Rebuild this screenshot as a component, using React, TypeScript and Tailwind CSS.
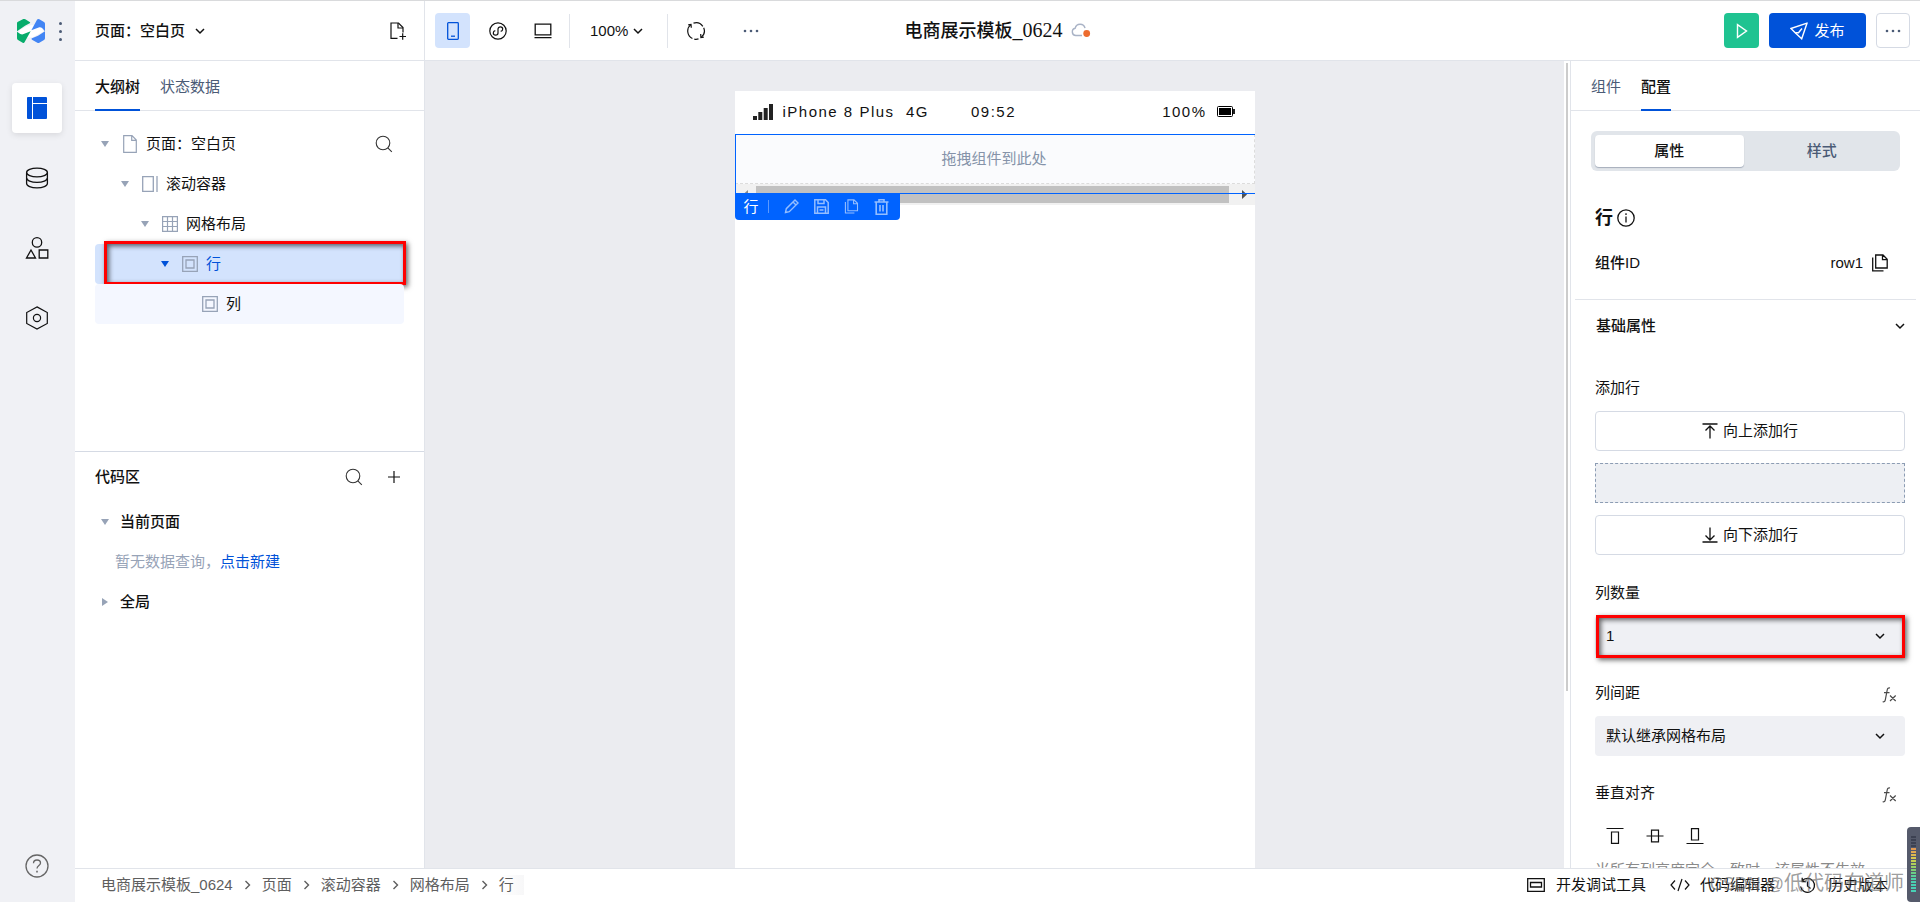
import React, { useState } from 'react';

type IconProps = { className?: string };

const ChevronDown: React.FC<IconProps> = ({ className = '' }) => (
  <svg className={className} width="10" height="10" viewBox="0 0 10 10" fill="none" stroke="currentColor" strokeWidth="1.5">
    <path d="M1 3l4 4 4-4" />
  </svg>
);

const ChevronRight: React.FC<IconProps> = ({ className = '' }) => (
  <svg className={className} width="9" height="10" viewBox="0 0 9 10" fill="none" stroke="currentColor" strokeWidth="1.4">
    <path d="M2.500 1l4 4-4 4" />
  </svg>
);

const SearchIcon = () => (
  <svg width="18" height="18" viewBox="0 0 18 18" fill="none" stroke="#333" strokeWidth="1.1">
    <circle cx="8" cy="8" r="6.8" />
    <path d="M12.800 12.800l4 4" />
  </svg>
);

const DotsIcon = () => (
  <svg width="16" height="4" viewBox="0 0 16 4" fill="#4b5b76">
    <circle cx="2" cy="2" r="1.300" />
    <circle cx="8" cy="2" r="1.300" />
    <circle cx="14" cy="2" r="1.300" />
  </svg>
);

const Caret = ({ open = true, active = false }: { open?: boolean; active?: boolean }) => (
  <svg width="10" height="10" viewBox="0 0 10 10" fill={active ? '#0052d9' : '#97a3b7'}>
    {open ? <path d="M1 2h8L5 8z" /> : <path d="M2 1v8l6-4z" />}
  </svg>
);

const Logo = () => (
  <svg width="28" height="24" viewBox="0 0 84 72">
    <path fill="#fff" d="M8 34L30 21l16-3 30 8 2 12-30 17-24 1L6 44z" />
    <path fill="#07ac6b" d="M0 12Q0 9 3 8L19 0q3-1 6 1l13 8q3 2 0 4L24 20 0 37z" />
    <path fill="#07ac6b" d="M0 38l10 7q4 2 8 1l23-9-18 32q-2 4-6 2L3 63q-3-2-3-5z" />
    <path fill="#4285f4" d="M84 37l-8-9q-4-4-9-3l-24 9L60 2q3-3 7-1l14 8q3 2 3 5z" />
    <path fill="#4285f4" d="M84 37v21q0 3-3 5l-14 8q-3 2-6 0L45 62q-3-2 0-4l18-8z" />
  </svg>
);

const LayoutIcon = () => (
  <svg width="22" height="22" viewBox="0 0 22 22" fill="#0052d9">
    <path d="M2 0h4v22H2a1 1 0 0 1-1-1V1a1 1 0 0 1 1-1z" />
    <path d="M7 0h13a1 1 0 0 1 1 1v5H7z" />
    <path d="M7 7h14v14a1 1 0 0 1-1 1H7z" />
  </svg>
);

const DatabaseIcon = () => (
  <svg width="24" height="22" viewBox="0 0 24 22" fill="none" stroke="currentColor" strokeWidth="1.3">
    <ellipse cx="12" cy="5.500" rx="10.400" ry="4.300" />
    <path d="M1.600 5.500v11c0 2.400 4.600 4.300 10.400 4.300s10.400-1.900 10.400-4.300v-11" />
    <path d="M1.600 11c0 2.400 4.600 4.300 10.400 4.300s10.400-1.900 10.400-4.300" />
  </svg>
);

const ShapesIcon = () => (
  <svg width="24" height="22" viewBox="0 0 24 22" fill="none" stroke="currentColor" strokeWidth="1.3">
    <circle cx="12" cy="5.400" r="4.700" />
    <path d="M6 13l4.500 8h-9z" />
    <path d="M14.200 13h8.600v8h-8.600z" />
  </svg>
);

const HexagonIcon = () => (
  <svg width="24" height="24" viewBox="0 0 24 24" fill="none" stroke="currentColor" strokeWidth="1.2">
    <path d="M12 0.900l10.300 5.600v11L12 23.100 1.700 17.500v-11z" />
    <circle cx="12" cy="12" r="3.600" />
  </svg>
);

const HelpIcon = () => (
  <svg width="24" height="24" viewBox="0 0 24 24" fill="none" stroke="#666" strokeWidth="1.3">
    <circle cx="12" cy="12" r="11" />
    <path d="M8.500 9.300c0-2 1.500-3.300 3.500-3.300s3.500 1.300 3.500 3.100c0 2.400-3.500 2.500-3.500 5.400" />
    <path d="M12 16.800v1.600" strokeWidth="1.6" />
  </svg>
);

const FilePlusIcon = () => (
  <svg width="18" height="18" viewBox="0 0 18 18" fill="none" stroke="currentColor" strokeWidth="1.2">
    <path d="M8.500 16.300H2V1h7.500l4.500 4.500v5" />
    <path d="M9 1v5h5" />
    <path d="M10.500 14.500h6.500M13.700 11.300v6.500" />
  </svg>
);

const PhoneIcon = () => (
  <svg width="12" height="18" viewBox="0 0 12 18" fill="none" stroke="#0052d9" strokeWidth="1.3">
    <rect x="0.700" y="0.700" width="10.600" height="16.600" rx="0.800" />
    <path d="M4 14.200h4" />
  </svg>
);

const MiniProgramIcon = () => (
  <svg width="18" height="18" viewBox="0 0 18 18" fill="none" stroke="currentColor" strokeWidth="1.2">
    <circle cx="9" cy="9" r="8.200" />
    <path d="M6.300 8.700C4.800 9 4.300 10 4.300 11c0 1.300 1 2.200 2.300 2.200S9 12.300 9 11V7c0-1.300 1.100-2.200 2.400-2.200S13.700 5.700 13.700 7c0 1-.5 2-2 2.300" />
  </svg>
);

const LaptopIcon = () => (
  <svg width="18" height="16" viewBox="0 0 18 16" fill="none" stroke="currentColor" strokeWidth="1.3">
    <path d="M1.200 1.200h15.600v10.600H1.200zM0.500 14.700h17" />
  </svg>
);

const RefreshIcon = () => (
  <svg width="20" height="20" viewBox="0 0 20 20" fill="none" stroke="currentColor" strokeWidth="1.2">
    <path d="M6.400 17.500A8.300 8.300 0 0 1 4.800 3.600M7.500 2.100a8.300 8.300 0 0 1 9.300 3.200" />
    <path d="M17.700 6.800a8.300 8.300 0 0 1-2.500 9.600M12.500 17.900a8.300 8.300 0 0 1-4.200.2" />
    <path d="M2.200 3.900l2.800-.4.300 3.300M17.800 16.100l-2.900.4-.2-3.500" />
  </svg>
);

const CloudIcon = () => (
  <svg width="20" height="15" viewBox="0 0 20 15" fill="none">
    <path d="M11 12.500H4.800a3.700 3.700 0 0 1-.6-7.300A5 5 0 0 1 14 5.200" stroke="#a9b3c6" strokeWidth="1.4" />
    <circle cx="15.700" cy="10.500" r="3.400" fill="#ed6c2f" />
  </svg>
);

const SendIcon = () => (
  <svg width="18" height="18" viewBox="0 0 18 18" fill="none" stroke="currentColor" strokeWidth="1.4">
    <path d="M17 1.200L0.900 6.500l4.300 4.300 6.500 6z" />
    <path d="M5.200 10.800h3.300L12 6.500" />
  </svg>
);

const PageIcon = () => (
  <svg width="14" height="18" viewBox="0 0 14 18" fill="none" stroke="#97a3b7" strokeWidth="1.2">
    <path d="M0.700 0.700h8.300l4.300 4.300v12.300H0.700z M8.700 0.700v4.600h4.600" />
  </svg>
);

const ScrollIcon = () => (
  <svg width="16" height="16" viewBox="0 0 16 16" fill="none" stroke="#97a3b7" strokeWidth="1.3">
    <path d="M0.700 0.700h10.600v14.600H0.700zM15 0v16" />
  </svg>
);

const GridIcon = () => (
  <svg width="16" height="16" viewBox="0 0 16 16" fill="none" stroke="#97a3b7" strokeWidth="1.2">
    <path d="M0.600 0.600h14.800v14.800H0.600zM0.600 5.500h14.800M0.600 10.500h14.800M5.500 0.600v14.800M10.500 0.600v14.800" />
  </svg>
);

const BoxIcon = () => (
  <svg width="16" height="16" viewBox="0 0 16 16" fill="none" stroke="#97a3b7" strokeWidth="1.3">
    <path d="M0.700 0.700h14.600v14.600H0.700zM4 4h8v8H4z" />
  </svg>
);

const CopyIcon = ({ size = 18 }: { size?: number }) => (
  <svg width={size} height={size} viewBox="0 0 18 18" fill="none" stroke="currentColor" strokeWidth="1.3">
    <path d="M4.700 1h7.300l4.200 4.200v8.800H4.700zM11.500 1v4.700h4.700M1.700 3.500v13.300h10.800" />
  </svg>
);

const PencilIcon = () => (
  <svg width="15" height="15" viewBox="0 0 15 15" fill="none" stroke="currentColor" strokeWidth="1.4">
    <path d="M1.500 13.500l.8-3.800L11 1l3 3-8.700 8.700zM9 3l3 3" />
  </svg>
);

const SaveIcon = () => (
  <svg width="15" height="15" viewBox="0 0 15 15" fill="none" stroke="currentColor" strokeWidth="1.5">
    <path d="M0.800 0.800h10.700l2.700 2.700v10.700H0.800zM4 1v3.500h6V1M3.500 14V8h8v6M5.500 11h4" />
  </svg>
);

const TrashIcon = () => (
  <svg width="15" height="16" viewBox="0 0 15 16" fill="none" stroke="currentColor" strokeWidth="1.6">
    <path d="M0.500 3h14M2.200 3v12.200h10.600V3M5 3V.8h5V3M6 6v6.500M9 6v6.500" />
  </svg>
);

const InfoIcon = () => (
  <svg width="18" height="18" viewBox="0 0 18 18" fill="none" stroke="currentColor" strokeWidth="1.3">
    <circle cx="9" cy="9" r="8.200" />
    <path d="M9 7.500v6M9 4.300v1.600" />
  </svg>
);

const FxIcon = () => (
  <svg width="15" height="16" viewBox="0 0 15 16" fill="none" stroke="#4a4a4a" strokeWidth="1.2">
    <path d="M8 1C6.300.6 5.500 1.500 5.200 3L3.300 12.800C3 14.500 2.200 15 .7 14.700M2 5.700h5.500M8 8.500l5.700 5.500M13.700 8.500L8 14" />
  </svg>
);

const AddUpIcon = () => (
  <svg width="16" height="16" viewBox="0 0 16 16" fill="none" stroke="currentColor" strokeWidth="1.3">
    <path d="M0.500 1h15M8 3.500v12M3.500 7.500L8 3l4.500 4.500" />
  </svg>
);

const AddDownIcon = () => (
  <svg width="16" height="16" viewBox="0 0 16 16" fill="none" stroke="currentColor" strokeWidth="1.3">
    <path d="M0.500 15h15M8 0.500v12M3.500 8.500L8 13l4.500-4.500" />
  </svg>
);

const AlignTopIcon = () => (
  <svg width="18" height="18" viewBox="0 0 18 18" fill="none" stroke="currentColor" strokeWidth="1.2">
    <path d="M0.500 1.500h17M5.500 5h7v11.300h-7z" />
  </svg>
);

const AlignMiddleIcon = () => (
  <svg width="18" height="18" viewBox="0 0 18 18" fill="none" stroke="currentColor" strokeWidth="1.2">
    <path d="M0.500 9h17M5.500 3.200h7v11.600h-7z" />
  </svg>
);

const AlignBottomIcon = () => (
  <svg width="18" height="18" viewBox="0 0 18 18" fill="none" stroke="currentColor" strokeWidth="1.2">
    <path d="M0.500 16.500h17M5.500 1.700h7V13h-7z" />
  </svg>
);

const DebugIcon = () => (
  <svg width="18" height="14" viewBox="0 0 18 14" fill="none" stroke="currentColor" strokeWidth="1.3">
    <path d="M0.700 0.700h16.600v12.600H0.700zM3.500 4.500h11v4.500h-11z" />
  </svg>
);

const CodeIcon = () => (
  <svg width="20" height="14" viewBox="0 0 20 14" fill="none" stroke="currentColor" strokeWidth="1.2">
    <path d="M5 2.500L1 7l4 4.500M15 2.500L19 7l-4 4.500M12 1L8 13" />
  </svg>
);

const HistoryIcon = () => (
  <svg width="17" height="17" viewBox="0 0 17 17" fill="none" stroke="currentColor" strokeWidth="1.3">
    <path d="M3 4A7 7 0 1 1 1.600 9.500M3.200 0.800V4.500h3.600M8.500 4.500V9l3 2.500" />
  </svg>
);

const SignalIcon = () => (
  <svg width="20" height="16" viewBox="0 0 20 16" fill="#222">
    <path d="M0 12h4v4H0zM5.300 8h4v8h-4zM10.700 4h4v12h-4zM16 0h4v16h-4z" />
  </svg>
);

const BatteryIcon = () => (
  <svg width="18" height="11" viewBox="0 0 18 11">
    <rect x="0.500" y="0.500" width="15" height="10" rx="1" fill="none" stroke="#000" />
    <rect x="2" y="2" width="12" height="7" fill="#000" />
    <path d="M16 3h2v5h-2z" fill="#222" />
  </svg>
);

// red frame drawn round the item being explained
const Callout = ({ className }: { className: string }) => (
  <span
    className={`pointer-events-none absolute border-3 border-[#fe0000] shadow-[2px_2px_5px_rgba(0,0,0,0.6),inset_2px_2px_5px_rgba(0,0,0,0.6)] ${className}`}
  />
);

const treeRows = [
  { name: '页面：空白页', indent: '', icon: <PageIcon />, open: true },
  { name: '滚动容器', indent: 'pl-5', icon: <ScrollIcon />, open: true },
  { name: '网格布局', indent: 'pl-10', icon: <GridIcon />, open: true },
  { name: '行', indent: 'pl-15', icon: <BoxIcon />, open: true, selected: true },
  { name: '列', indent: 'pl-20', icon: <BoxIcon />, open: false, child: true },
];

const navItems = [
  { label: '页面设计', icon: <LayoutIcon />, active: true },
  { label: '数据源', icon: <DatabaseIcon /> },
  { label: '素材', icon: <ShapesIcon /> },
  { label: '设置', icon: <HexagonIcon /> },
];

const crumbs = ['电商展示模板_0624', '页面', '滚动容器', '网格布局', '行'];

const meterBars = [
  'bg-[#3c4152]', 'bg-[#3c4152]', 'bg-[#3c4152]', 'bg-[#3c4152]', 'bg-[#e39a52]', 'bg-[#e0a94f]', 'bg-[#dcb94e]',
  'bg-[#d6c94f]', 'bg-[#c6cf52]', 'bg-[#b0cf5a]', 'bg-[#98cf66]', 'bg-[#80ce74]', 'bg-[#6bce86]', 'bg-[#5bcf99]',
  'bg-[#50d0a8]', 'bg-[#4bd0b0]', 'bg-[#48d1b5]', 'bg-[#48d1b5]', 'bg-[#48d1b5]',
];

const SideNav = () => (
  <nav className="flex w-[75px] shrink-0 flex-col items-center bg-[#f0f1f5] pr-px pb-[11px]">
    <div className="flex h-[60px] w-full items-center gap-[13px] pl-[17px]">
      <Logo />
      <button type="button" aria-label="菜单" className="flex w-1 flex-col items-center gap-[5px]">
        <i className="size-[3px] rounded-full bg-[#4b5b76]" />
        <i className="size-[3px] rounded-full bg-[#4b5b76]" />
        <i className="size-[3px] rounded-full bg-[#4b5b76]" />
      </button>
    </div>
    <div className="mt-[22px] flex flex-col gap-5">
      {navItems.map((item) => (
        <button
          key={item.label}
          type="button"
          aria-label={item.label}
          className={`flex size-[50px] items-center justify-center rounded ${item.active ? 'bg-white shadow-[0_2px_6px_rgba(0,0,0,0.1)]' : ''}`}
        >
          {item.icon}
        </button>
      ))}
    </div>
    <button type="button" aria-label="帮助" className="mt-auto flex size-[50px] items-center justify-center">
      <HelpIcon />
    </button>
  </nav>
);

const TopBar = () => (
  <header className="grid h-[60px] shrink-0 grid-cols-[1fr_auto_1fr] border-b border-[#e1e4ea]">
    <div className="flex items-center">
      <div className="flex h-full w-[350px] items-center border-r border-[#e1e4ea] pr-[17px] pl-5">
        <button type="button" className="flex items-center gap-[10px] font-medium">
          页面：空白页
          <ChevronDown />
        </button>
        <button type="button" aria-label="新建页面" className="ml-auto">
          <FilePlusIcon />
        </button>
      </div>
      <div className="flex items-center pl-[10px]">
        <button type="button" aria-label="手机" className="flex size-[35px] items-center justify-center rounded bg-[#d3e3fd]">
          <PhoneIcon />
        </button>
        <button type="button" aria-label="小程序" className="ml-[10px] flex size-[35px] items-center justify-center">
          <MiniProgramIcon />
        </button>
        <button type="button" aria-label="电脑" className="ml-[10px] flex size-[35px] items-center justify-center">
          <LaptopIcon />
        </button>
        <span className="ml-[9px] h-[34px] w-px bg-[#e1e4ea]" />
        <button type="button" className="ml-5 flex items-center gap-[5px]">
          100%
          <ChevronDown />
        </button>
        <span className="ml-6 h-[34px] w-px bg-[#e1e4ea]" />
        <button type="button" aria-label="刷新" className="ml-[18px]">
          <RefreshIcon />
        </button>
        <button type="button" aria-label="更多操作" className="ml-[37px]">
          <DotsIcon />
        </button>
      </div>
    </div>
    <h1 className="flex items-center gap-2 text-[18px] font-medium whitespace-nowrap">
      <span>
        电商展示模板
        <span className="font-['Liberation_Serif',serif] text-[20px]">_0624</span>
      </span>
      <CloudIcon />
    </h1>
    <div className="flex items-center justify-end gap-[10px] pr-[10px]">
      <button type="button" aria-label="预览" className="flex size-[35px] items-center justify-center rounded bg-[#1fc391]">
        <svg width="12" height="16" viewBox="0 0 12 16" fill="none" stroke="#fff" strokeWidth="1.4">
          <path d="M1.500 1.700v12.600L10.500 8z" />
        </svg>
      </button>
      <button type="button" className="flex h-[35px] w-[97px] items-center justify-center gap-[6px] rounded bg-[#0052d9] text-white">
        <SendIcon />
        发布
      </button>
      <button type="button" aria-label="更多" className="flex h-[35px] w-[34px] items-center justify-center rounded border border-[#d5dae4]">
        <DotsIcon />
      </button>
    </div>
  </header>
);

const OutlinePanel = () => (
  <aside className="flex w-[350px] shrink-0 flex-col border-r border-[#e1e4ea]">
    <section className="h-[390px] shrink-0">
      <div role="tablist" className="flex h-[50px] gap-5 border-b border-[#e1e4ea] px-5">
        <button type="button" role="tab" aria-selected="true" className="-mb-px border-b-2 border-[#0052d9] pt-[3px] font-medium">
          大纲树
        </button>
        <button type="button" role="tab" aria-selected="false" className="pt-[2px] text-[#4b5b76]">
          状态数据
        </button>
      </div>
      <ul className="px-5 pt-[13px]">
        {treeRows.map((row) => (
          <li
            key={row.name}
            className={`relative flex h-10 items-center ${row.indent} ${
              row.selected ? 'rounded bg-[#d3e3fd] text-[#0052d9]' : row.child ? 'rounded bg-[#f4f7ff]' : ''
            }`}
          >
            <span className="flex w-5 justify-center">{row.open && <Caret active={row.selected} />}</span>
            <span className="ml-[5px] flex w-5 justify-center">{row.icon}</span>
            <span className="ml-[6px]">{row.name}</span>
            {row.indent === '' && (
              <button type="button" aria-label="搜索组件" className="mr-[11px] ml-auto">
                <SearchIcon />
              </button>
            )}
            {row.selected && <Callout className="-top-[3px] -right-[2px] -bottom-px left-[9px]" />}
          </li>
        ))}
      </ul>
    </section>
    <section className="border-t border-[#d5dae4] px-5">
      <div className="flex h-[50px] items-center">
        <h2 className="font-medium">代码区</h2>
        <button type="button" aria-label="搜索代码" className="ml-auto">
          <SearchIcon />
        </button>
        <button type="button" aria-label="新建代码" className="mr-1 ml-[25px]">
          <svg width="12" height="12" viewBox="0 0 12 12" stroke="currentColor" strokeWidth="1.2">
            <path d="M0 6h12M6 0v12" />
          </svg>
        </button>
      </div>
      <div className="flex h-10 items-center gap-[10px] pl-[5px] font-medium">
        <Caret />
        当前页面
      </div>
      <p className="flex h-10 items-center pl-5 text-[#97a3b7]">
        暂无数据查询，
        <a href="#new" className="text-[#0052d9]">点击新建</a>
      </p>
      <div className="flex h-10 items-center gap-[10px] pl-[5px] font-medium">
        <Caret open={false} />
        全局
      </div>
    </section>
  </aside>
);

const Canvas = () => (
  <main className="flex min-w-0 flex-1 justify-center overflow-hidden bg-[#ebecf0] pt-[30px]">
    <div className="flex w-[520px] flex-col bg-white">
      <div className="flex h-[43px] items-center pr-5 pb-[2px] pl-[18px] tracking-widest">
        <div className="flex flex-1 items-center gap-[10px]">
          <SignalIcon />
          <span className="whitespace-pre">iPhone 8 Plus  4G</span>
        </div>
        <span>09:52</span>
        <div className="flex flex-1 items-center justify-end gap-[10px]">
          <span>100%</span>
          <BatteryIcon />
        </div>
      </div>
      <div className="relative">
        <div className="flex h-[50px] items-center justify-center border-r border-b border-dashed border-[#dcdcdc] bg-[#fafbfd] text-[#8593a9]">
          拖拽组件到此处
        </div>
        <div className="flex h-[21px] items-center bg-[#f1f1f1]">
          <span className="flex w-[21px] justify-center">
            <svg width="5" height="9" viewBox="0 0 5 9" fill="#8a8a8a"><path d="M5 0v9L0 4.500z" /></svg>
          </span>
          <span className="h-[17px] flex-1 bg-[#c1c1c1]" />
          <span className="flex w-[26px] justify-end pr-2">
            <svg width="5" height="9" viewBox="0 0 5 9" fill="#505050"><path d="M0 0v9l5-4.500z" /></svg>
          </span>
        </div>
        {/* selection outline with its tool strip */}
        <div className="pointer-events-none absolute inset-x-0 top-0 h-[60px] border border-r-0 border-[#0063ff]" />
        <div className="absolute top-[59px] left-0 flex h-[27px] items-center rounded-b bg-[#0063ff] pr-[11px] pl-[9px] text-white">
          行
          <span className="ml-[9px] h-[13px] w-px bg-[#5c9aff]" />
          <div className="ml-[15px] flex gap-[15px] text-[#94beff]">
            <button type="button" aria-label="编辑"><PencilIcon /></button>
            <button type="button" aria-label="保存"><SaveIcon /></button>
            <button type="button" aria-label="复制"><CopyIcon size={15} /></button>
            <button type="button" aria-label="删除"><TrashIcon /></button>
          </div>
        </div>
      </div>
    </div>
  </main>
);

type SelectFieldProps = { id: string; label: string; value: string; fx?: boolean; marked?: boolean };

const SelectField: React.FC<SelectFieldProps> = ({ id, label, value, fx, marked }) => (
  <div className="pt-[17px]">
    <div className="mb-[3px] flex h-10 items-center justify-between pr-2">
      <label htmlFor={id}>{label}</label>
      {fx && <button type="button" aria-label={`${label}表达式`} className="pt-1"><FxIcon /></button>}
    </div>
    <div className="relative">
      <select id={id} defaultValue={value} className="h-10 w-full appearance-none rounded bg-[#eff0f4] px-[11px]">
        <option>{value}</option>
      </select>
      <ChevronDown className="pointer-events-none absolute top-[15px] right-5" />
      {marked && <Callout className="-top-px right-0 -bottom-[2px] left-px" />}
    </div>
  </div>
);

const ConfigPanel = () => {
  const [tab, setTab] = useState('attr');

  const segment = (active: boolean) =>
    active
      ? 'flex-1 rounded bg-white font-medium shadow-[0_1px_1px_rgba(75,91,118,0.4)]'
      : 'flex-1 font-medium text-[#4b5b76]';

  return (
    <aside className="w-[350px] shrink-0 overflow-hidden border-l border-[#e1e4ea]">
      <div role="tablist" className="flex h-[50px] gap-5 border-b border-[#e1e4ea] px-5">
        <button type="button" role="tab" aria-selected="false" className="pt-[2px] text-[#4b5b76]">
          组件
        </button>
        <button type="button" role="tab" aria-selected="true" className="-mb-px border-b-2 border-[#0052d9] pt-[3px] font-medium">
          配置
        </button>
      </div>
      <div className="px-5 pt-5">
        <div className="flex h-10 gap-1 rounded-md bg-[#e1e5ea] p-1">
          <button type="button" className={segment(tab === 'attr')} onClick={() => setTab('attr')}>属性</button>
          <button type="button" className={segment(tab === 'style')} onClick={() => setTab('style')}>样式</button>
        </div>
      </div>
      <div className="px-6">
        <h2 className="mt-[27px] flex h-10 items-center gap-1 text-[18px] font-bold">
          行
          <InfoIcon />
        </h2>
        <div className="mt-[5px] flex h-10 items-center">
          <span className="font-medium">组件ID</span>
          <span className="ml-auto">row1</span>
          <button type="button" aria-label="复制ID" className="mr-[7px] ml-2">
            <CopyIcon />
          </button>
        </div>
      </div>
      <hr className="mx-1 mt-4 border-[#e1e4ea]" />
      <button type="button" className="flex h-[51px] w-full items-center justify-between pr-[15px] pl-[25px] font-medium">
        基础属性
        <ChevronDown />
      </button>
      <div className="pr-[15px] pl-6">
        <div className="pt-[17px]">
          <h3 className="mb-[3px] flex h-10 items-center">添加行</h3>
          <div className="flex flex-col gap-3 pb-px">
            <button type="button" className="flex h-10 items-center justify-center gap-[5px] rounded border border-[#d5dae4]">
              <AddUpIcon />
              向上添加行
            </button>
            <div className="h-10 border border-dashed border-[#8c9cb3] bg-[#edeff3]" />
            <button type="button" className="flex h-10 items-center justify-center gap-[5px] rounded border border-[#d5dae4]">
              <AddDownIcon />
              向下添加行
            </button>
          </div>
        </div>
        <SelectField id="col-count" label="列数量" value="1" marked />
        <SelectField id="col-gap" label="列间距" value="默认继承网格布局" fx />
        <div className="pt-[17px]">
          <div className="mb-[3px] flex h-10 items-center justify-between pr-2">
            <h3>垂直对齐</h3>
            <button type="button" aria-label="垂直对齐表达式" className="pt-1"><FxIcon /></button>
          </div>
          <div className="flex h-10 items-center gap-[22px] pl-[11px]">
            <button type="button" aria-label="顶部对齐"><AlignTopIcon /></button>
            <button type="button" aria-label="居中对齐"><AlignMiddleIcon /></button>
            <button type="button" aria-label="底部对齐"><AlignBottomIcon /></button>
          </div>
          <p className="pt-[2px] leading-6 text-[#8a8a8a]">当所有列高度完全一致时，该属性不生效</p>
        </div>
      </div>
    </aside>
  );
};

const StatusBar = () => (
  <footer className="flex h-[34px] shrink-0 items-center border-t border-[#e1e4ea] bg-white pr-8 pb-px pl-[26px]">
    <nav className="flex items-center text-[#5e5e5e]">
      {crumbs.map((name, i) => (
        <React.Fragment key={name}>
          {i > 0 && <ChevronRight className="mx-[10px]" />}
          <a href="#crumb" className={i === crumbs.length - 1 ? 'bg-linear-to-r from-white to-[#f7f7f8] pr-[10px]' : ''}>
            {name}
          </a>
        </React.Fragment>
      ))}
    </nav>
    <div className="ml-auto flex items-center gap-6">
      <button type="button" className="flex items-center gap-[11px]"><DebugIcon />开发调试工具</button>
      <button type="button" className="flex items-center gap-[10px]"><CodeIcon />代码编辑器</button>
      <button type="button" className="flex items-center gap-[12px]"><HistoryIcon />历史版本</button>
    </div>
  </footer>
);

export default function App() {
  return (
    <div className="relative flex h-screen overflow-hidden border-t border-[#d9dadc] bg-white font-['Liberation_Sans','Noto_Sans_CJK_SC',sans-serif] text-[15px] leading-5 text-[#111]">
      <SideNav />
      <div className="flex min-w-0 flex-1 flex-col">
        <TopBar />
        <div className="flex min-h-0 flex-1">
          <OutlinePanel />
          <Canvas />
          <div className="w-[6px] shrink-0 px-[2px] pt-[2px]">
            <div className="h-[78%] bg-[#ccc]" />
          </div>
          <ConfigPanel />
        </div>
        <StatusBar />
      </div>
      <div className="pointer-events-none absolute right-4 bottom-[4px] text-[20px] leading-7 whitespace-nowrap text-[#666]/65">
        <span className="text-[18px]">CSDN @</span>低代码布道师
      </div>
      <div className="absolute right-0 bottom-0 flex h-[75px] w-[13px] flex-col items-center gap-px rounded-l bg-[#555a6b] pt-[9px]">
        {meterBars.map((bar, i) => (
          <i key={i} className={`h-[2px] w-[5px] ${bar}`} />
        ))}
      </div>
    </div>
  );
}
